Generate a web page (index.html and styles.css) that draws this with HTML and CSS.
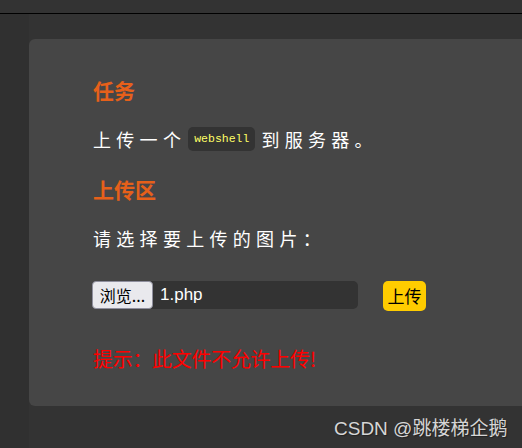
FILE: index.html
```html
<!DOCTYPE html>
<html lang="zh">
<head>
<meta charset="utf-8">
<link rel="stylesheet" href="styles.css">
</head>
<body>
<div class="topbar"></div>
<div class="layout">
  <div class="side"></div>
  <div class="main">
    <div class="card">
      <h2 class="title">任务</h2>
      <p class="text">上传一个<code class="code">webshell</code>到服务器。</p>
      <h2 class="title">上传区</h2>
      <p class="text">请选择要上传的图片：</p>
      <div class="form-row">
        <div class="file">
          <span class="file-btn">浏览...</span>
          <span class="file-name">1.php</span>
        </div>
        <span class="submit">上传</span>
      </div>
      <p class="msg">提示：此文件不允许上传!</p>
    </div>
  </div>
</div>
<div class="watermark">CSDN @跳楼梯企鹅</div>
</body>
</html>
```
FILE: styles.css
```css
html, body {
  margin: 0;
  padding: 0;
}
body {
  width: 522px;
  height: 448px;
  overflow: hidden;
  background: #333333;
  font-family: "Noto Sans CJK SC", "Noto Sans", sans-serif;
  position: relative;
}
.topbar {
  height: 13px;
  background: #333333;
  border-bottom: 1px solid #000;
}
.layout {
  display: flex;
  height: 434px;
}
.side {
  width: 29px;
  flex: none;
  background: #303030;
}
.main {
  flex: 1;
  padding-top: 25px;
  min-width: 0;
}
.card {
  background: #464646;
  border-radius: 6px 0 0 6px;
  height: 367px;
  margin-right: -20px;
  box-sizing: border-box;
  padding: 37px 0 0 64px;
  display: flex;
  flex-direction: column;
  align-items: flex-start;
}
.title {
  margin: 0;
  font-size: 21px;
  line-height: 28px;
  font-weight: 700;
  color: #e6601a;
}
.text {
  margin: 23px 0 24px;
  font-size: 18px;
  line-height: 24px;
  letter-spacing: 5.3px;
  color: #ffffff;
  display: flex;
  align-items: center;
}
.code {
  font-family: "Liberation Mono", monospace;
  font-size: 11.5px;
  letter-spacing: 0;
  color: #ffff66;
  background: #333333;
  border-radius: 5px;
  padding: 0 6px;
  height: 24px;
  line-height: 24px;
  margin: 0 6px 0 2px;
}
.form-row {
  margin-top: 4px;
  display: flex;
  align-items: center;
}
.file {
  display: flex;
  align-items: center;
  width: 266px;
  height: 28px;
  background: #333333;
  border-radius: 5px;
  margin-left: -1px;
}
.file-btn {
  box-sizing: border-box;
  height: 28px;
  width: 61px;
  background: #e9e9ed;
  border: 1px solid #8f8f9d;
  border-radius: 4px;
  color: #000;
  font-size: 16px;
  line-height: 26px;
  text-align: center;
}
.file-name {
  margin-left: 7px;
  color: #ffffff;
  font-family: "Liberation Sans", Arial, sans-serif;
  font-size: 17px;
}
.submit {
  margin-left: 25px;
  width: 43px;
  height: 30px;
  margin-top: 3px;
  background: #ffcc00;
  border-radius: 5px;
  color: #000;
  font-size: 17px;
  line-height: 30px;
  text-align: center;
}
.msg {
  margin: 35px 0 0;
  color: #ff0000;
  font-size: 20px;
  line-height: 26px;
  letter-spacing: -0.3px;
}
.watermark {
  position: absolute;
  left: 334px;
  top: 416px;
  font-family: "Liberation Sans", "Noto Sans CJK SC", sans-serif;
  font-size: 19px;
  line-height: 26px;
  color: #d6d6d6;
  text-shadow: 1px 1px 1px #222;
}
```
